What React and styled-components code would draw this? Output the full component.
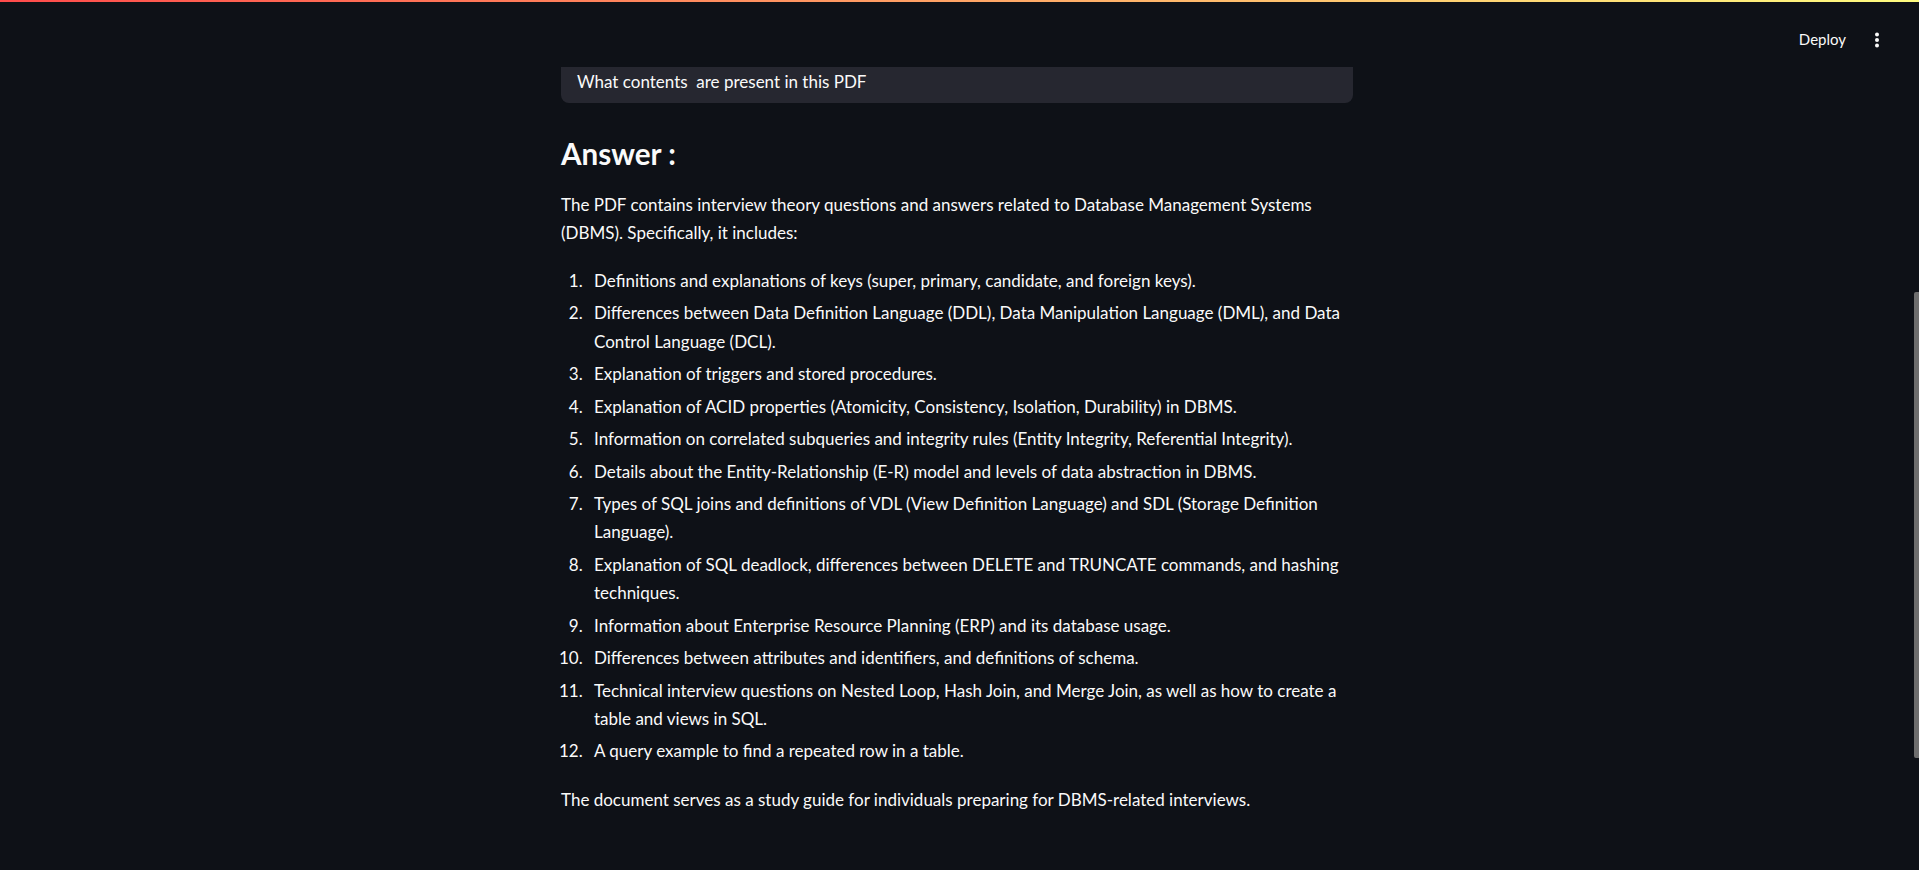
import React from "react";
import styled, { createGlobalStyle } from "styled-components";

const GlobalStyle = createGlobalStyle`
  html, body {
    margin: 0;
    padding: 0;
    background-color: #0e1117;
    overflow: hidden;
  }
  body {
    font-family: "Lato", "Liberation Sans", sans-serif;
    color: #fafafa;
  }
`;

const Page = styled.div`
  min-height: 100vh;
  padding-right: 5px;
`;

const Decoration = styled.div`
  position: fixed;
  top: 0;
  left: 0;
  right: 0;
  height: 2px;
  background-image: linear-gradient(90deg, rgb(255, 75, 75), rgb(255, 253, 128));
  z-index: 3;
`;

const Header = styled.header`
  height: 55px;
  padding: 12px 35px 0 0;
  display: flex;
  align-items: center;
  justify-content: flex-end;
  gap: 29px;
`;

const HeaderButton = styled.button`
  background: none;
  border: none;
  color: #fafafa;
  font-family: "Lato", "Liberation Sans", sans-serif;
  font-size: 15px;
  padding: 0;
  margin-top: -2px;
  cursor: pointer;
`;

const MenuButton = styled.button`
  background: none;
  border: none;
  padding: 0;
  display: flex;
  align-items: center;
  cursor: pointer;
`;

const Main = styled.main`
  width: 792px;
  margin: 0 auto;
  font-size: 17px;
  line-height: 28.2px;
`;

const QuestionCard = styled.div`
  background-color: #262730;
  border-radius: 0 0 8px 8px;
  padding: 1px 16px 7px;
  line-height: 28px;
  white-space: pre-wrap;
`;

const Heading = styled.h3`
  font-size: 29.6px;
  font-weight: 700;
  line-height: 1.2;
  margin: 33px 0 19px;
`;

const Paragraph = styled.p`
  margin: 0 0 ${props => props.gap || 0}px;
`;

const List = styled.ol`
  margin: 0 0 21px;
  padding-left: 26px;
`;

const Item = styled.li`
  padding-left: 7px;
  & + & {
    margin-top: 4.3px;
  }
`;

const ScrollThumb = styled.div`
  position: fixed;
  right: 0;
  top: 292px;
  width: 5px;
  height: 466px;
  background-color: #6e6e6e;
  border-radius: 2px 0 0 2px;
`;

const items = [
  "Definitions and explanations of keys (super, primary, candidate, and foreign keys).",
  "Differences between Data Definition Language (DDL), Data Manipulation Language (DML), and Data Control Language (DCL).",
  "Explanation of triggers and stored procedures.",
  "Explanation of ACID properties (Atomicity, Consistency, Isolation, Durability) in DBMS.",
  "Information on correlated subqueries and integrity rules (Entity Integrity, Referential Integrity).",
  "Details about the Entity-Relationship (E-R) model and levels of data abstraction in DBMS.",
  "Types of SQL joins and definitions of VDL (View Definition Language) and SDL (Storage Definition Language).",
  "Explanation of SQL deadlock, differences between DELETE and TRUNCATE commands, and hashing techniques.",
  "Information about Enterprise Resource Planning (ERP) and its database usage.",
  "Differences between attributes and identifiers, and definitions of schema.",
  "Technical interview questions on Nested Loop, Hash Join, and Merge Join, as well as how to create a table and views in SQL.",
  "A query example to find a repeated row in a table.",
];

const App = () => {
  return (
    <Page>
      <GlobalStyle />
      <Decoration />
      <Header>
        <HeaderButton>Deploy</HeaderButton>
        <MenuButton>
          <svg width="4" height="16" viewBox="0 0 4 16">
            <circle cx="2" cy="2.5" r="2" fill="#fafafa" />
            <circle cx="2" cy="8" r="2" fill="#fafafa" />
            <circle cx="2" cy="13.5" r="2" fill="#fafafa" />
          </svg>
        </MenuButton>
      </Header>
      <Main>
        <QuestionCard>{"What contents  are present in this PDF"}</QuestionCard>
        <Heading>Answer :</Heading>
        <Paragraph gap={20}>
          The PDF contains interview theory questions and answers related to Database Management Systems (DBMS).
          Specifically, it includes:
        </Paragraph>
        <List>
          {items.map((text, i) => (
            <Item key={i}>{text}</Item>
          ))}
        </List>
        <Paragraph>The document serves as a study guide for individuals preparing for DBMS-related interviews.</Paragraph>
      </Main>
      <ScrollThumb />
    </Page>
  );
};

export default App;
